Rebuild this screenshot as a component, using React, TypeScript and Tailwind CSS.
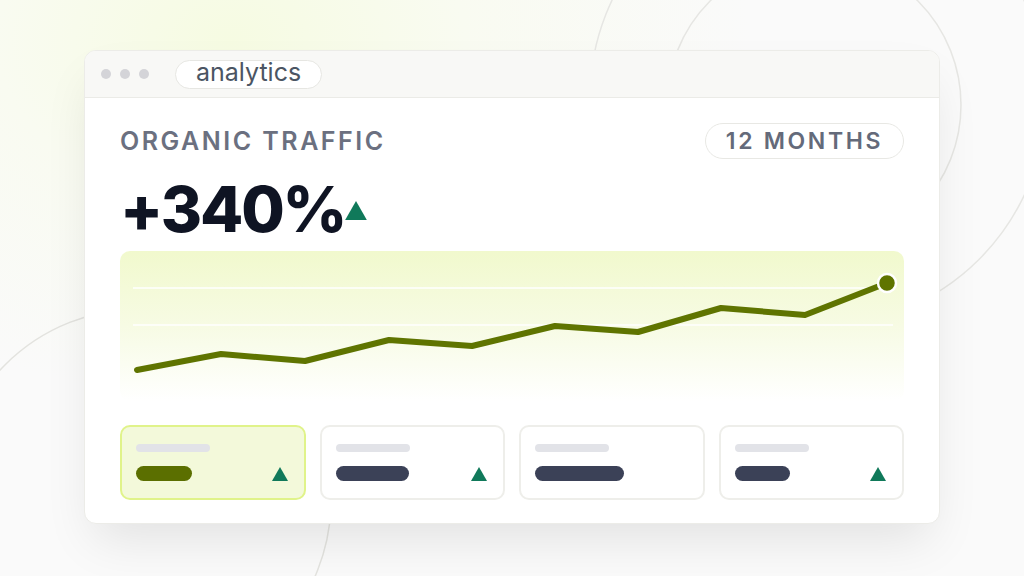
import React from "react";

const Tri = ({ className }: { className: string }) => (
  <svg viewBox="0 0 16 14" className={className}>
    <polygon points="8,0 16,14 0,14" fill="#10795a" />
  </svg>
);

const pts: [number, number][] = [
  [17, 119],
  [101, 103],
  [185, 110],
  [269, 89],
  [352, 95],
  [435, 75],
  [518, 81],
  [601, 57],
  [685, 64],
  [767, 32],
];

const stats = [
  { dark: 56, active: true, up: true },
  { dark: 73, active: false, up: true },
  { dark: 89, active: false, up: false },
  { dark: 55, active: false, up: true },
];

export default function App() {
  return (
    <div
      className="relative w-[1024px] h-[576px] overflow-hidden bg-[#fafafa]"
      style={{ fontFamily: "Inter, 'Noto Sans', sans-serif" }}
    >
      <div className="absolute inset-0 bg-[radial-gradient(ellipse_520px_360px_at_230px_40px,#f6fbe2_0%,#f9fbf1_45%,rgba(250,250,250,0)_100%)]" />
      <svg className="absolute inset-0" width="1024" height="576">
        <circle cx="818" cy="98" r="228" fill="none" stroke="#e6e6e3" strokeWidth="1.5" />
        <circle cx="814" cy="105" r="147" fill="none" stroke="#e6e6e3" strokeWidth="1.5" />
        <circle cx="140" cy="500" r="191" fill="none" stroke="#e3e3df" strokeWidth="1.5" />
      </svg>

      <div className="relative flex justify-center pt-[50px]">
        <div className="w-[856px] h-[474px] rounded-[12px] bg-white border border-[#ecece8] shadow-[0_24px_50px_-10px_rgba(0,0,0,0.10)] overflow-hidden flex flex-col">
          <div className="h-[47px] bg-[#f8f8f6] border-b border-[#ebebe7] flex items-center pl-[16px]">
            <div className="flex gap-[9px]">
              <div className="w-[10px] h-[10px] rounded-full bg-[#d4d4d8]" />
              <div className="w-[10px] h-[10px] rounded-full bg-[#d4d4d8]" />
              <div className="w-[10px] h-[10px] rounded-full bg-[#d4d4d8]" />
            </div>
            <div className="ml-[26px] h-[29px] px-[20px] rounded-full border border-[#e6e6e2] bg-white flex items-center text-[25px] text-[#4b5563] leading-none pb-[3px]">
              analytics
            </div>
          </div>

          <div className="flex-1 px-[35px] pt-[25px] flex flex-col">
            <div className="flex justify-between items-center">
              <div className="text-[25px] font-semibold tracking-[0.1em] text-[#6b7080] leading-none">
                ORGANIC TRAFFIC
              </div>
              <div className="h-[36px] w-[199px] rounded-full border border-[#e8e8e4] flex items-center justify-center text-[23px] font-semibold tracking-[0.115em] text-[#646a7a] leading-none">
                12 MONTHS
              </div>
            </div>

            <div className="flex items-end mt-[20px] h-[62px]">
              <div className="text-[63px] font-extrabold tracking-[-0.035em] text-[#0f1423] leading-none">
                +340%
              </div>
              <Tri className="w-[22px] h-[19px] mb-[21px]" />
            </div>

            <div className="mt-[10px] h-[150px] rounded-[10px] bg-gradient-to-b from-[#f1f9cd] via-[#f7fbe4] to-white relative">
              <svg width="786" height="150" className="block">
                <line x1="13" y1="37" x2="773" y2="37" stroke="#ffffff" strokeWidth="1.5" />
                <line x1="13" y1="74" x2="773" y2="74" stroke="#ffffff" strokeWidth="1.5" />
                <polyline
                  points={pts.map((p) => p.join(",")).join(" ")}
                  fill="none"
                  stroke="#5f7400"
                  strokeWidth="6"
                  strokeLinejoin="round"
                  strokeLinecap="round"
                />
                <circle cx="767" cy="32" r="9" fill="#5f7400" stroke="#ffffff" strokeWidth="2.5" />
              </svg>
            </div>

            <div className="mt-[24px] grid grid-cols-4 gap-[14px]">
              {stats.map((s, i) => (
                <div
                  key={i}
                  className={
                    s.active
                      ? "h-[75px] rounded-[10px] border-2 border-[#e0f38a] bg-[#f3f9da] px-[14px] pt-[17px] flex flex-col"
                      : "h-[75px] rounded-[10px] border-2 border-[#eeeeea] bg-white px-[14px] pt-[17px] flex flex-col"
                  }
                >
                  <div className="w-[74px] h-[8px] rounded-full bg-[#e2e3e8]" />
                  <div className="mt-[14px] flex items-end justify-between">
                    <div
                      className={s.active ? "h-[15px] rounded-full bg-[#5b6f00]" : "h-[15px] rounded-full bg-[#3b4157]"}
                      style={{ width: s.dark }}
                    />
                    {s.up && <Tri className="w-[16px] h-[14px] mr-[2px]" />}
                  </div>
                </div>
              ))}
            </div>
          </div>
        </div>
      </div>
    </div>
  );
}
